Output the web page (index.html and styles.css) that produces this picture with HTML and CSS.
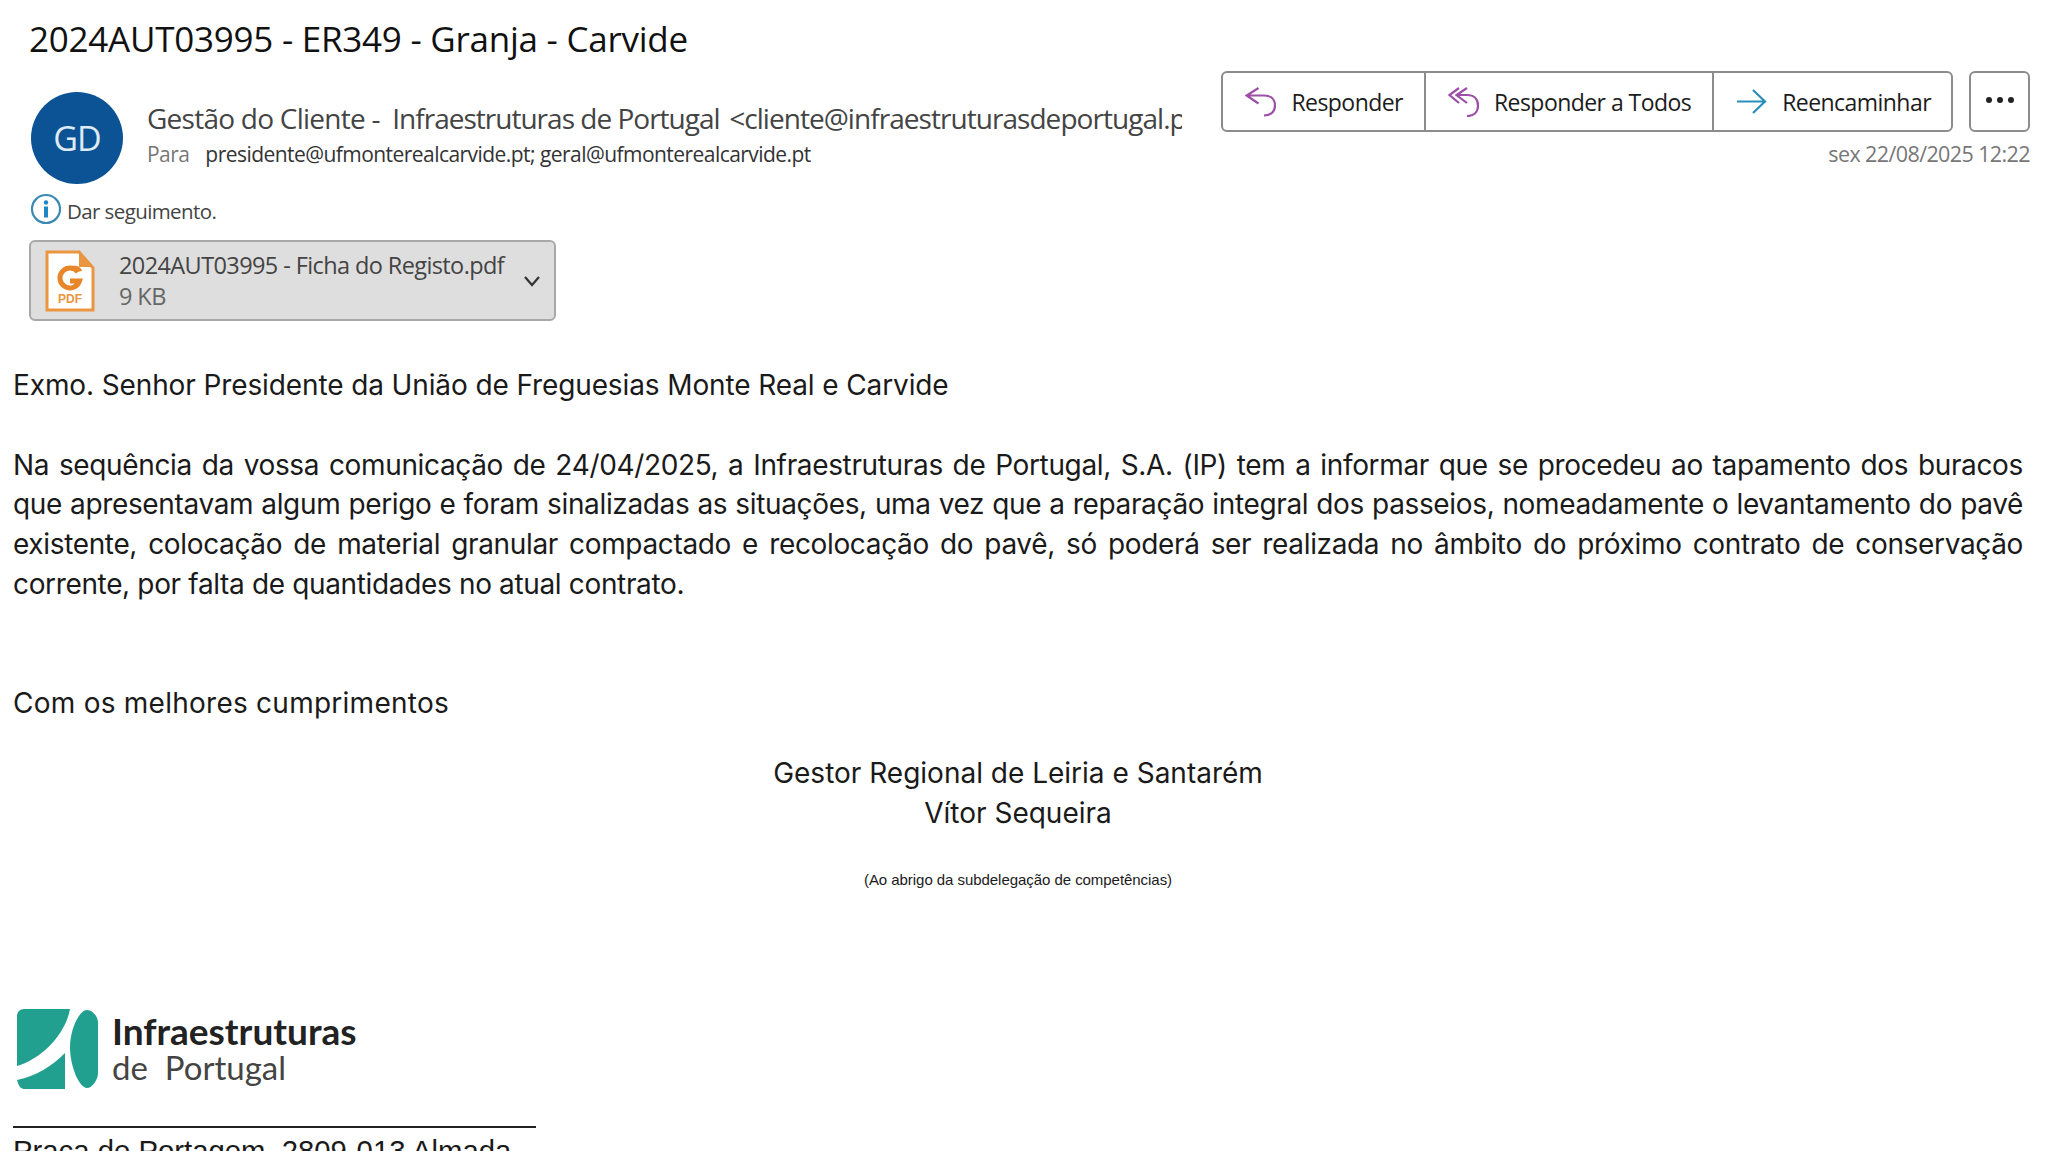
FILE: index.html
```html
<!DOCTYPE html>
<html lang="pt-PT">
<head>
    <meta charset="UTF-8">
    <meta name="viewport" content="width=device-width, initial-scale=1.0">
    <title>2024AUT03995 - ER349 - Granja - Carvide</title>
    <link rel="stylesheet" href="styles.css">
</head>
<body>
    <div class="cabecalho">
        <h1 class="assunto">2024AUT03995 - ER349 - Granja - Carvide</h1>

        <div class="linha-remetente">
            <div class="avatar">GD</div>
            <div class="remetente">
                <div class="nome">Gestão do Cliente - <span class="empresa">Infraestruturas de Portugal</span> <span class="email">&lt;cliente@infraestruturasdeportugal.pt&gt;</span></div>
                <div class="destinatarios"><span class="para">Para</span>presidente@ufmonterealcarvide.pt; geral@ufmonterealcarvide.pt</div>
            </div>
            <div class="lado-direito">
                <div class="acoes">
                    <div class="grupo-botoes">
                        <div class="botao">
                            <svg class="icone" viewBox="0 0 32 30"><path class="roxo" d="M13.5 1 1.5 8.5l12 8M1.5 8.5H19c7 0 11 4 11 10s-4 10-11 10"/></svg>
                            Responder
                        </div>
                        <div class="botao">
                            <svg class="icone" viewBox="0 0 32 30"><path class="roxo" d="M11 1 1.5 8l9.5 8M19 1 8.500 8l10.500 8M8.500 8H19c7 0 11 4 11 10.500S26 29 19 29"/></svg>
                            Responder a Todos
                        </div>
                        <div class="botao">
                            <svg class="icone" viewBox="0 0 32 30"><path class="azul" d="M1 14.500h28M17 3l12 11.500L17 26"/></svg>
                            Reencaminhar
                        </div>
                    </div>
                    <div class="botao-mais"><span></span><span></span><span></span></div>
                </div>
                <div class="data">sex 22/08/2025 12:22</div>
            </div>
        </div>

        <div class="seguimento">
            <svg class="icone-info" viewBox="0 0 32 32">
                <circle cx="16" cy="16" r="14" fill="none" stroke="#3a8ab5" stroke-width="2.2"/>
                <circle cx="16" cy="9.500" r="2.200" fill="#1f86c4"/>
                <rect x="14" y="13.500" width="4" height="11" fill="#1f86c4"/>
            </svg>
            <span class="seguimento-texto">Dar seguimento.</span>
        </div>

        <div class="anexo">
            <svg class="icone-pdf" viewBox="0 0 50 64">
                <path d="M2 3h32l14 16v42H2z" fill="#fff" stroke="#ea953f" stroke-width="3"/>
                <path d="M34 1l15 17H34z" fill="#ea953f"/>
                <path d="M33 23a10 10 0 1 0 1.500 9H25" fill="none" stroke="#e8862a" stroke-width="5"/>
                <path d="M27 17c5-1 9 1 10 5l-6 1z" fill="#e8862a"/>
                <text x="25" y="54" class="texto-pdf">PDF</text>
            </svg>
            <div class="anexo-info">
                <div class="anexo-nome">2024AUT03995 - Ficha do Registo.pdf</div>
                <div class="anexo-tamanho">9 KB</div>
            </div>
            <svg class="seta-anexo" viewBox="0 0 18 12"><path d="M2 2l7 8 7-8"/></svg>
        </div>
    </div>

    <div class="mensagem">
        <p class="saudacao">Exmo. Senhor Presidente da União de Freguesias Monte Real e Carvide</p>
        <p class="paragrafo">Na sequência da vossa comunicação de 24/04/2025, a Infraestruturas de Portugal, S.A. (IP) tem a informar que se procedeu ao tapamento dos buracos que apresentavam algum perigo e foram sinalizadas as situações, uma vez que a reparação integral dos passeios, nomeadamente o levantamento do pavê existente, colocação de material granular compactado e recolocação do pavê, só poderá ser realizada no âmbito do próximo contrato de conservação corrente, por falta de quantidades no atual contrato.</p>
        <p class="despedida">Com os melhores cumprimentos</p>
        <div class="assinatura">
            <p>Gestor Regional de Leiria e Santarém</p>
            <p>Vítor Sequeira</p>
            <p class="subdelegacao">(Ao abrigo da subdelegação de competências)</p>
        </div>

        <div class="logotipo">
            <svg class="logo-marca" viewBox="0 0 82 82">
                <path d="M8 1h46C50 24 28 50 1 58V8c0-4 3-7 7-7z" fill="#22a08f"/>
                <path d="M49 45v36H9c-4 0-6-2-8-9 19-4 35-14 48-27z" fill="#22a08f"/>
                <path d="M71 2c5 0 11 6 11 13v50c0 7-6 15-11 15-8 0-17-22-17-41C54 22 63 2 71 2z" fill="#22a08f"/>
            </svg>
            <div class="logo-texto">
                <div class="logo-nome">Infraestruturas</div>
                <div class="logo-de">de&nbsp; Portugal</div>
            </div>
        </div>
        <div class="regua"></div>
        <p class="morada">Praça de Portagem, 2809-013 Almada</p>
    </div>
</body>
</html>
```

FILE: styles.css
```css
html, body {
    margin: 0;
    padding: 0;
    height: 1151px;
    overflow: hidden;
    background-color: white;
}

body {
    font-family: "Open Sans", sans-serif;
    color: #1c1c1c;
}

.cabecalho {
    padding: 16px 18px 0 29px;
}

.assunto {
    margin: 0;
    font-size: 35px;
    line-height: 46px;
    font-weight: 400;
    letter-spacing: -0.25px;
    color: #111;
}

.linha-remetente {
    display: flex;
    margin-top: 9px;
}

.avatar {
    width: 92px;
    height: 92px;
    margin: 21px 0 0 2px;
    flex-shrink: 0;
    border-radius: 50%;
    background-color: #0b5394;
    color: #dfeaf4;
    font-size: 34px;
    line-height: 92px;
    text-align: center;
    letter-spacing: -1px;
}

.remetente {
    width: 1035px;
    margin: 27px 0 0 24px;
    overflow: hidden;
    white-space: nowrap;
}

.nome {
    font-size: 28px;
    line-height: 40px;
    letter-spacing: -0.75px;
    color: #444;
}

.empresa {
    margin-left: 6px;
    letter-spacing: -0.99px;
}

.email {
    margin-left: 3px;
    letter-spacing: -0.95px;
}

.destinatarios {
    margin-top: 1px;
    font-size: 21px;
    line-height: 30px;
    letter-spacing: -0.55px;
    color: #333;
}

.para {
    margin-right: 16px;
    color: #777;
}

.lado-direito {
    margin-left: auto;
}

.acoes {
    display: flex;
    gap: 16px;
}

.grupo-botoes {
    display: flex;
    height: 61px;
    border: 2px solid #8c8c8c;
    border-radius: 6px;
    box-sizing: border-box;
}

.botao {
    display: flex;
    align-items: center;
    gap: 14px;
    padding: 0 21px 0 22px;
    border-right: 2px solid #8c8c8c;
    font-size: 23px;
    letter-spacing: -0.55px;
}

.botao:last-child {
    padding-right: 20px;
    border-right: none;
}

.icone {
    width: 32px;
    height: 30px;
}

.icone path {
    fill: none;
    stroke-width: 2.2;
}

.roxo {
    stroke: #9b4fa6;
}

.azul {
    stroke: #2a8dbd;
}

.botao-mais {
    display: flex;
    align-items: center;
    justify-content: center;
    gap: 5px;
    width: 61px;
    height: 61px;
    box-sizing: border-box;
    border: 2px solid #8c8c8c;
    border-radius: 6px;
    padding-bottom: 3px;
}

.botao-mais span {
    width: 6px;
    height: 6px;
    border-radius: 50%;
    background-color: #222;
}

.data {
    margin-top: 7px;
    text-align: right;
    font-size: 21.5px;
    line-height: 30px;
    letter-spacing: -0.6px;
    color: #777;
}

.seguimento {
    display: flex;
    align-items: center;
    gap: 5px;
    margin: 9px 0 0 1px;
    height: 32px;
    font-size: 20.5px;
    letter-spacing: -0.6px;
    color: #444;
}

.seguimento-texto {
    margin-top: 4px;
}

.icone-info {
    width: 32px;
    height: 32px;
}

.anexo {
    display: flex;
    align-items: center;
    width: 527px;
    height: 81px;
    margin-top: 15px;
    box-sizing: border-box;
    border: 2px solid #a8a8a8;
    border-radius: 6px;
    background-color: #dedede;
}

.icone-pdf {
    width: 50px;
    height: 64px;
    margin-left: 14px;
}

.texto-pdf {
    font-family: "Liberation Sans", sans-serif;
    font-size: 12px;
    font-weight: 700;
    fill: #ea953f;
    text-anchor: middle;
}

.anexo-info {
    margin-left: 24px;
    font-size: 23.5px;
    line-height: 31px;
    letter-spacing: -0.6px;
    color: #444;
    white-space: nowrap;
}

.anexo-tamanho {
    color: #666;
}

.seta-anexo {
    width: 18px;
    height: 12px;
    margin-left: 19px;
}

.seta-anexo path {
    fill: none;
    stroke: #333;
    stroke-width: 2.2;
}

.mensagem {
    padding: 0 25px 0 13px;
    font-family: "Inter", sans-serif;
    font-size: 28px;
    line-height: 39.7px;
    letter-spacing: -0.115px;
    color: #1a1a1a;
}

.mensagem p {
    margin: 0;
}

.mensagem .saudacao {
    margin-top: 45px;
}

.mensagem .paragrafo {
    margin-top: 40px;
    text-align: justify;
    letter-spacing: -0.35px;
}

.mensagem .despedida {
    margin-top: 79px;
    letter-spacing: 0.25px;
}

.assinatura {
    margin-top: 31px;
    text-align: center;
    letter-spacing: 0;
}

.mensagem .subdelegacao {
    margin-top: 34px;
    font-family: "Liberation Sans", sans-serif;
    font-size: 15px;
    line-height: 24px;
    letter-spacing: -0.05px;
}

.logotipo {
    display: flex;
    align-items: center;
    gap: 14px;
    margin: 116px 0 0 3px;
}

.logo-marca {
    width: 82px;
    height: 82px;
    flex-shrink: 0;
}

.logo-texto {
    font-family: "Lato", sans-serif;
    font-size: 37px;
    line-height: 37px;
    letter-spacing: 0;
    color: #222;
}

.logo-nome {
    font-weight: 700;
}

.logo-de {
    font-size: 33px;
    color: #444;
}

.regua {
    width: 523px;
    height: 2px;
    margin-top: 36px;
    background-color: #222;
}

.mensagem .morada {
    font-family: "Liberation Sans", sans-serif;
    font-size: 29.3px;
    letter-spacing: 0;
    margin-top: 3px;
}
```
